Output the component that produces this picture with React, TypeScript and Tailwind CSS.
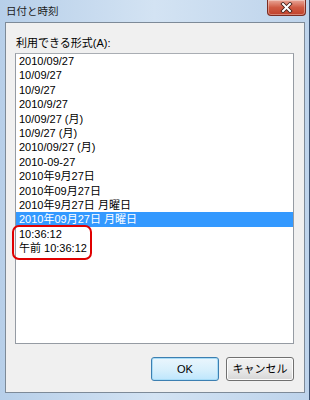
import React from "react";

const items = [
  "2010/09/27",
  "10/09/27",
  "10/9/27",
  "2010/9/27",
  "10/09/27 (月)",
  "10/9/27 (月)",
  "2010/09/27 (月)",
  "2010-09-27",
  "2010年9月27日",
  "2010年09月27日",
  "2010年9月27日 月曜日",
  "2010年09月27日 月曜日",
  "10:36:12",
  "午前 10:36:12",
];

const font = { fontFamily: "'Liberation Sans', 'Noto Sans CJK JP', sans-serif" };

export default function App() {
  return (
    <div
      className="relative w-[310px] h-[400px] overflow-hidden bg-gradient-to-r from-[#b7cfe9] via-[#d3e3f3] to-[#bdd3eb] border-r border-r-[#3a5170] text-[11px] text-black"
      style={font}
    >
      {/* Title bar */}
      <div className="h-[22px] flex items-start justify-between">
        <div className="pl-[6px] pt-[4px] text-[10.5px] leading-[14px] text-[#1b1b1b]">日付と時刻</div>
        <div className="mr-[3px] w-[39px] h-[16px] rounded-b-[4px] border border-t-0 border-[#7a2c22] bg-gradient-to-b from-[#e8a597] via-[#cf5a43] to-[#c0412b] flex items-center justify-center shadow-[inset_0_0_0_1px_rgba(255,255,255,0.35)]">
          <svg width="13" height="11" viewBox="0 0 13 11">
            <path d="M3 2 L10 9 M10 2 L3 9" stroke="#3a1a14" strokeWidth="3.6" strokeLinecap="square" />
            <path d="M3 2 L10 9 M10 2 L3 9" stroke="#ffffff" strokeWidth="2" strokeLinecap="square" />
          </svg>
        </div>
      </div>

      {/* Client area */}
      <div className="ml-[5px] mr-[4px] h-[371px] bg-[#f0f0f0] border border-[#7d8a98] flex flex-col pl-[9px] pr-[10px] pt-[13px]">
        <div className="h-[14px] leading-[14px] pl-[1px]">利用できる形式(A):</div>
        <div className="mt-[3px] h-[291px] bg-white border border-[#959ba3] border-t-[#a9adb3] pt-0 relative">
          {items.map((t, i) => (
            <div
              key={i}
              className={
                i === 11
                  ? "h-[14.4px] leading-[14.4px] pl-[3px] bg-[#3399ff] text-white whitespace-nowrap"
                  : "h-[14.4px] leading-[14.4px] pl-[3px] whitespace-nowrap"
              }
            >
              {t}
            </div>
          ))}
          <div className="absolute left-[-4px] top-[171px] w-[80px] h-[35px] border-2 border-[#e00000] rounded-[7px]"></div>
        </div>
        <div className="mt-[13px] flex justify-end gap-[7px] pr-0">
          <button className="w-[68px] h-[24px] rounded-[3px] border border-[#3c7fb1] bg-gradient-to-b from-[#eaf6fd] via-[#d9f0fc] to-[#bee6fd] shadow-[inset_0_0_0_1px_#a8dcf7] text-[11px] text-black" style={font}>
            OK
          </button>
          <button className="w-[68px] h-[24px] rounded-[3px] border border-[#707070] bg-gradient-to-b from-[#f2f2f2] via-[#ebebeb] to-[#d6d6d6] shadow-[inset_0_0_0_1px_#fcfcfc] text-[11px] text-black" style={font}>
            キャンセル
          </button>
        </div>
      </div>
    </div>
  );
}
